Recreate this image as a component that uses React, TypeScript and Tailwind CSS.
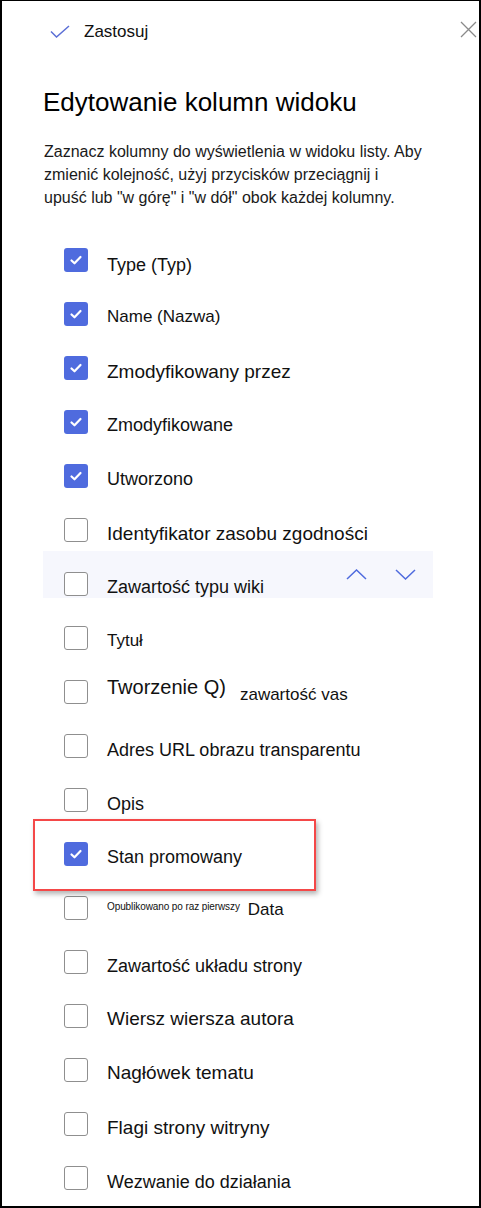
import React from 'react';

interface Column {
  label: React.ReactNode;
  checked?: boolean;
  textClass: string;
}

const columns: Column[] = [
  { label: 'Type (Typ)', checked: true, textClass: 'text-[18px] pt-[22px]' },
  { label: 'Name (Nazwa)', checked: true, textClass: 'text-[17px] pt-[20px]' },
  { label: 'Zmodyfikowany przez', checked: true, textClass: 'text-[19px] pt-[20px]' },
  { label: 'Zmodyfikowane', checked: true, textClass: 'text-[18px] pt-[20px]' },
  { label: 'Utworzono', checked: true, textClass: 'text-[18px] pt-[20px]' },
  { label: 'Identyfikator zasobu zgodności', textClass: 'text-[19px] pt-[20px]' },
];

const moreColumns: Column[] = [
  { label: 'Tytuł', textClass: 'text-[17px] pt-[20px]' },
  {
    label: (
      <>
        Tworzenie Q)
        <span className="ml-[14px] text-[17px] align-[-6px]">zawartość vas</span>
      </>
    ),
    textClass: 'text-[20px] pt-[11px]',
  },
  { label: 'Adres URL obrazu transparentu', textClass: 'text-[18px] pt-[21px]' },
  { label: 'Opis', textClass: 'text-[18px] pt-[21px]' },
];

const lastColumns: Column[] = [
  {
    label: (
      <>
        <span className="text-[10px] align-[5px] tracking-[-0.1px]">Opublikowano po raz pierwszy</span>
        <span className="ml-2">Data</span>
      </>
    ),
    textClass: 'text-[17px] pt-[19px]',
  },
  { label: 'Zawartość układu strony', textClass: 'text-[18px] pt-[21px]' },
  { label: 'Wiersz wiersza autora', textClass: 'text-[19px] pt-[19px]' },
  { label: 'Nagłówek tematu', textClass: 'text-[19px] pt-[19px]' },
  { label: 'Flagi strony witryny', textClass: 'text-[19px] pt-[20px]' },
  { label: 'Wezwanie do działania', textClass: 'text-[18px] pt-[21px]' },
];

const Checkbox = ({ checked, className }: { checked?: boolean; className: string }) =>
  checked ? (
    <div className={`w-6 h-6 shrink-0 rounded-[3px] bg-[#4f6bde] flex items-center justify-center ${className}`}>
      <svg width="24" height="24" viewBox="0 0 24 24" fill="none">
        <path d="M7.5 12.5 L10.5 15.3 L16.5 9" stroke="white" strokeWidth="2.2" strokeLinecap="round" strokeLinejoin="round" />
      </svg>
    </div>
  ) : (
    <div className={`w-6 h-6 shrink-0 rounded-[3px] border border-[#8f8f8f] bg-white ${className}`} />
  );

const Row = ({ col }: { col: Column }) => (
  <div className="flex items-start h-[54px]">
    <Checkbox checked={col.checked} className="mt-[15px]" />
    <div className={`ml-[19px] whitespace-nowrap ${col.textClass}`}>{col.label}</div>
  </div>
);

export default function App() {
  return (
    <div
      className="w-[481px] h-[1208px] bg-white border-l-2 border-r-2 border-t border-b-2 border-black overflow-hidden text-[#111] leading-[normal]"
      style={{ fontFamily: '"Liberation Sans", Arial, sans-serif' }}
    >
      {/* Header */}
      <div className="h-[60px] flex items-start pt-[19px]">
        <svg className="ml-[48px] mt-[5px]" width="20" height="13" viewBox="0 0 20 13" fill="none">
          <path d="M1 6.5 L6.5 12 L19 1" stroke="#5b6fd6" strokeWidth="1.5" />
        </svg>
        <span className="ml-[14px] mt-[2px] text-[17px]">Zastosuj</span>
        <svg className="ml-auto mr-[2px] mt-[1px]" width="17" height="17" viewBox="0 0 17 17" fill="none">
          <path d="M1 1 L16 16 M16 1 L1 16" stroke="#8a8a8a" strokeWidth="1.3" />
        </svg>
      </div>

      <h1 className="mt-[26px] pl-[41px] text-[26px] font-normal text-black">Edytowanie kolumn widoku</h1>

      <p className="mt-[22px] pl-[42px] text-[16px] leading-[23px] text-[#1a1a1a]">
        Zaznacz kolumny do wyświetlenia w widoku listy. Aby
        <br />
        zmienić kolejność, użyj przycisków przeciągnij i
        <br />
        upuść lub "w górę" i "w dół" obok każdej kolumny.
      </p>

      {/* Column list */}
      <div className="mt-[24px] pl-[62px] flex flex-col">
        {columns.map((c, i) => (
          <Row key={i} col={c} />
        ))}

        {/* Hovered row with move buttons */}
        <div className="-mt-[6px] mb-[13px] h-[47px] w-[390px] -ml-[21px] pl-[21px] bg-[#f6f7fd] flex items-start">
          <Checkbox className="mt-[21px]" />
          <div className="ml-[19px] pt-[26px] text-[18px] whitespace-nowrap">Zawartość typu wiki</div>
          <div className="ml-auto mr-[17px] mt-[18px] flex gap-[28px]">
            <svg width="21" height="11" viewBox="0 0 21 11" fill="none">
              <path d="M1 10 L10.5 1 L20 10" stroke="#4f6bde" strokeWidth="1.5" />
            </svg>
            <svg width="21" height="11" viewBox="0 0 21 11" fill="none">
              <path d="M1 1 L10.5 10 L20 1" stroke="#4f6bde" strokeWidth="1.5" />
            </svg>
          </div>
        </div>

        {moreColumns.map((c, i) => (
          <Row key={i} col={c} />
        ))}

        {/* Highlighted row */}
        <div className="relative flex items-start h-[54px]">
          <Checkbox checked className="mt-[15px]" />
          <div className="ml-[19px] pt-[20px] text-[18px] whitespace-nowrap">Stan promowany</div>
          <div className="absolute left-[-31px] top-[-8px] w-[283px] h-[72px] border-2 border-[#f44848] shadow-[2px_3px_5px_rgba(0,0,0,0.3)]" />
        </div>

        {lastColumns.map((c, i) => (
          <Row key={i} col={c} />
        ))}
      </div>
    </div>
  );
}
